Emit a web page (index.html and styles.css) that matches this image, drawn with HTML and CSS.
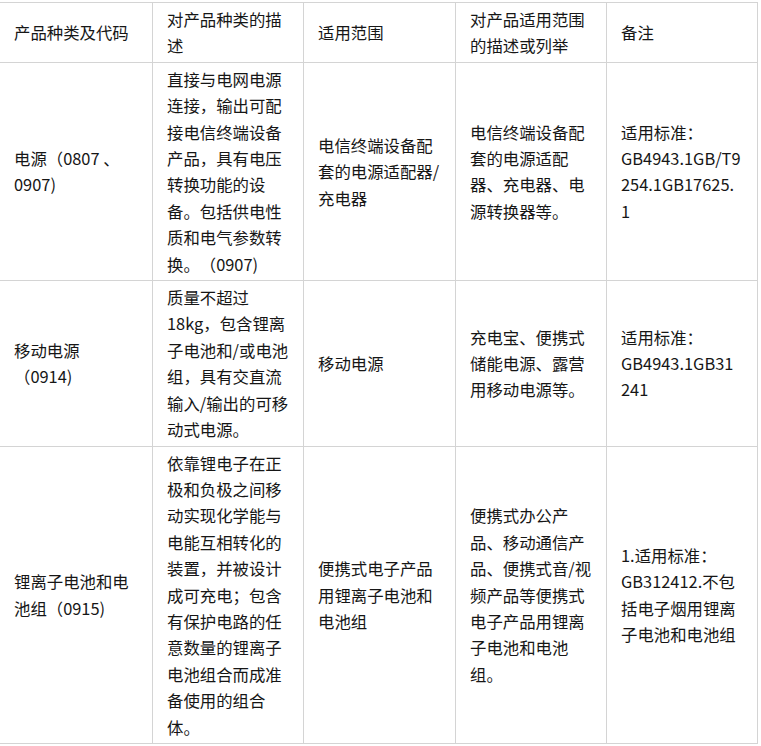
FILE: index.html
```html
<!DOCTYPE html>
<html lang="zh-CN">
<head>
<meta charset="utf-8">
<link rel="stylesheet" href="styles.css">
</head>
<body>
<table class="spec">
  <colgroup>
    <col class="c1"><col class="c2"><col class="c3"><col class="c4"><col class="c5">
  </colgroup>
  <tr>
    <td>产品种类及代码</td>
    <td>对产品种类的描<br>述</td>
    <td>适用范围</td>
    <td>对产品适用范围<br>的描述或列举</td>
    <td>备注</td>
  </tr>
  <tr>
    <td>电源（0807 、<br>0907)</td>
    <td>直接与电网电源<br>连接，输出可配<br>接电信终端设备<br>产品，具有电压<br>转换功能的设<br>备。包括供电性<br>质和电气参数转<br>换。（0907)</td>
    <td>电信终端设备配<br>套的电源适配器/<br>充电器</td>
    <td>电信终端设备配<br>套的电源适配<br>器、充电器、电<br>源转换器等。</td>
    <td>适用标准：<br>GB4943.1GB/T9<br>254.1GB17625.<br>1</td>
  </tr>
  <tr>
    <td>移动电源<br>（0914)</td>
    <td>质量不超过<br>18kg，包含锂离<br>子电池和/或电池<br>组，具有交直流<br>输入/输出的可移<br>动式电源。</td>
    <td>移动电源</td>
    <td>充电宝、便携式<br>储能电源、露营<br>用移动电源等。</td>
    <td>适用标准：<br>GB4943.1GB31<br>241</td>
  </tr>
  <tr>
    <td>锂离子电池和电<br>池组（0915)</td>
    <td>依靠锂电子在正<br>极和负极之间移<br>动实现化学能与<br>电能互相转化的<br>装置，并被设计<br>成可充电；包含<br>有保护电路的任<br>意数量的锂离子<br>电池组合而成准<br>备使用的组合<br>体。</td>
    <td>便携式电子产品<br>用锂离子电池和<br>电池组</td>
    <td>便携式办公产<br>品、移动通信产<br>品、便携式音/视<br>频产品等便携式<br>电子产品用锂离<br>子电池和电池<br>组。</td>
    <td>1.适用标准：<br>GB312412.不包<br>括电子烟用锂离<br>子电池和电池组</td>
  </tr>
</table>
</body>
</html>
```

FILE: styles.css
```css
html, body {
  margin: 0;
  padding: 0;
  background: #ffffff;
}
body {
  padding-top: 2px;
  overflow: hidden;
}
.spec {
  border-collapse: collapse;
  table-layout: fixed;
  width: 759px;
  margin-left: -1px;
  font-family: "Noto Sans CJK SC", "Noto Sans", sans-serif;
  font-size: 16.4px;
  line-height: 26.4px;
  color: #161616;
  text-spacing-trim: space-all;
}
.c1 { width: 153px; }
.c2 { width: 151px; }
.c3 { width: 152px; }
.c4 { width: 151px; }
.c5 { width: 151px; }
.spec td {
  border: 1px solid #d4d4d4;
  padding: 3px 10px 3px 14px;
  vertical-align: middle;
  white-space: nowrap;
  overflow: hidden;
}
```
